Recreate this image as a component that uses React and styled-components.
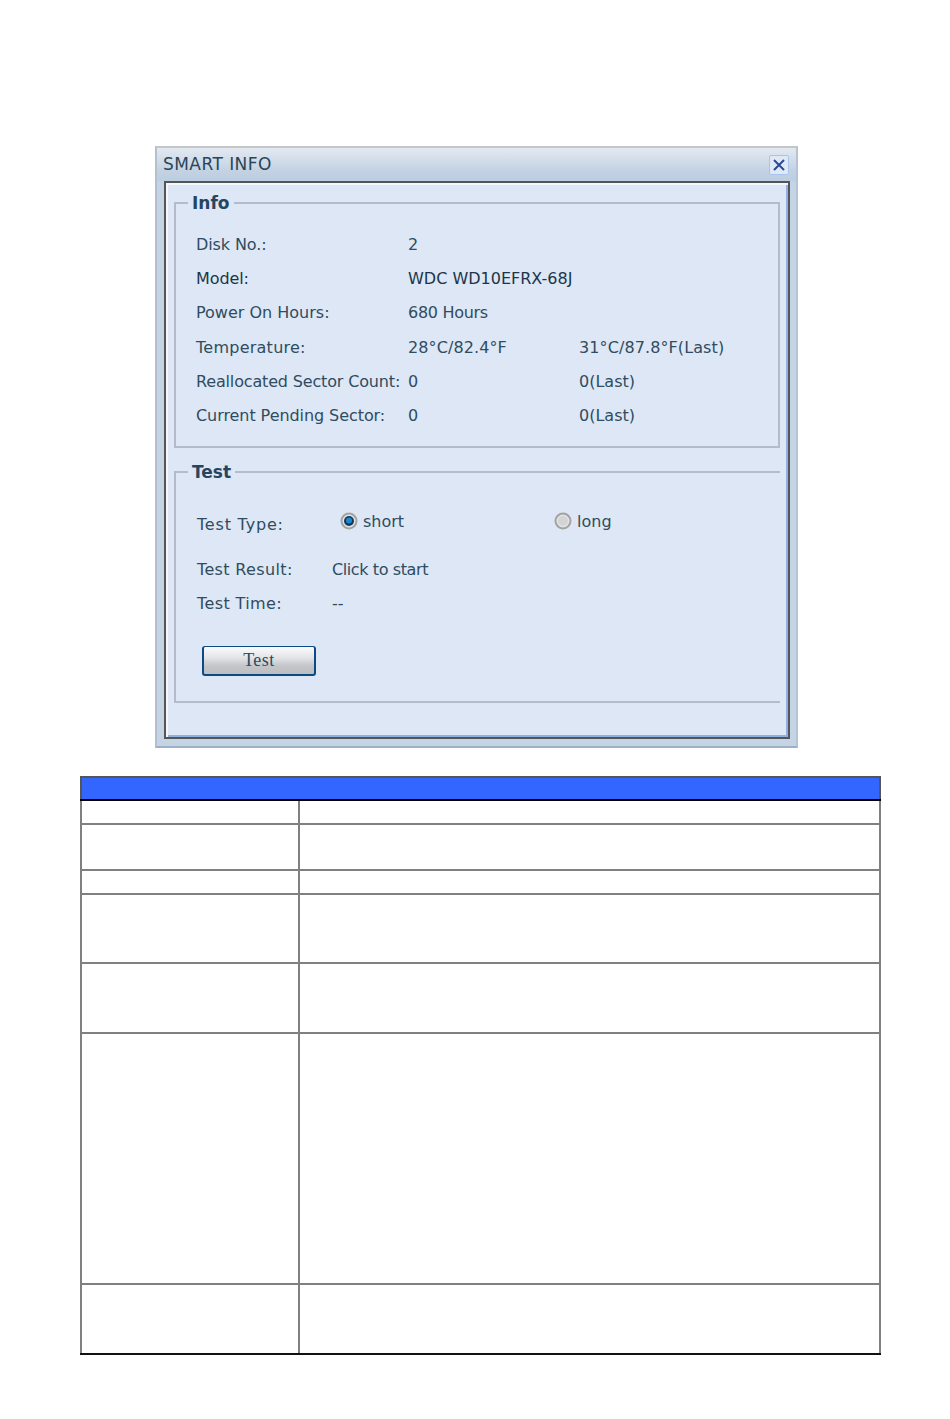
import React from 'react';
import styled, { createGlobalStyle } from 'styled-components';

const GlobalStyle = createGlobalStyle`
 body {
  margin: 0;
  background: #fff;
  font-family: 'DejaVu Sans', Verdana, sans-serif;
 }
`;

const INFO_ROWS = [
  { label: 'Disk No.:', value: '2', track: -0.1 },
  { label: 'Model:', value: 'WDC WD10EFRX-68J', dark: true, track: -0.1 },
  { label: 'Power On Hours:', value: '680 Hours', track: 0, valueTrack: -0.3 },
  { label: 'Temperature:', value: '28°C/82.4°F', last: '31°C/87.8°F(Last)', track: 0.25, valueTrack: 0.1 },
  { label: 'Reallocated Sector Count:', value: '0', last: '0(Last)', track: -0.16 },
  { label: 'Current Pending Sector:', value: '0', last: '0(Last)', track: -0.07 },
];

const TABLE_ROWS = [24, 46, 24, 69, 70, 251, 70];

function CloseIcon() {
  return (
    <svg width="14" height="14" viewBox="0 0 14 14">
      <path d="M2 2 L12 12 M12 2 L2 12" stroke="#2b4a9a" strokeWidth="2" fill="none" />
    </svg>
  );
}

function RadioIcon({ checked }) {
  return (
    <svg width="18" height="18" viewBox="0 0 18 18">
      <circle cx="9" cy="9" r="7.5" fill="#e4e4e4" stroke="#a3a3a3" strokeWidth="2" />
      {checked ? (
        <>
          <circle cx="9" cy="9" r="5" fill="#12385f" />
          <circle cx="9" cy="8.5" r="3" fill="#1f86cc" />
        </>
      ) : (
        <circle cx="9" cy="9" r="5" fill="#d2d4d6" />
      )}
    </svg>
  );
}

export default function App() {
  return (
    <>
      <GlobalStyle />
      <Page>
        <Dialog>
          <TitleBar>
            <Title>SMART INFO</Title>
            <CloseButton><CloseIcon /></CloseButton>
          </TitleBar>
          <Body>
            <InfoSet>
              <Legend>Info</Legend>
              <InfoGrid>
                {INFO_ROWS.map((row) => (
                  <React.Fragment key={row.label}>
                    <Field $dark={row.dark} $track={row.track}>{row.label}</Field>
                    <Field $dark={row.dark} $track={row.valueTrack}>{row.value}</Field>
                    <Field $track={row.valueTrack}>{row.last}</Field>
                  </React.Fragment>
                ))}
              </InfoGrid>
            </InfoSet>
            <TestSet>
              <Legend>Test</Legend>
              <TypeRow>
                <TypeLabel>Test Type:</TypeLabel>
                <RadioOption $width="214px">
                  <RadioIcon checked />
                  short
                </RadioOption>
                <RadioOption>
                  <RadioIcon />
                  long
                </RadioOption>
              </TypeRow>
              <ResultRow $top="24px">
                <ResultLabel $track={0.35}>Test Result:</ResultLabel>
                <Field $track={-0.4}>Click to start</Field>
              </ResultRow>
              <ResultRow $top="9px">
                <ResultLabel $track={0.4}>Test Time:</ResultLabel>
                <Field>--</Field>
              </ResultRow>
              <TestButton type="button">Test</TestButton>
            </TestSet>
          </Body>
        </Dialog>
        <SpecTable>
          <colgroup>
            <col width="218" />
            <col />
          </colgroup>
          <thead>
            <tr>
              <HeadCell colSpan={2} />
            </tr>
          </thead>
          <tbody>
            {TABLE_ROWS.map((height, i) => (
              <Row key={i} $height={height}>
                <Cell />
                <Cell />
              </Row>
            ))}
          </tbody>
        </SpecTable>
      </Page>
    </>
  );
}

const Page = styled.div`
 width: 950px;
 height: 1419px;
 padding-top: 146px;
 box-sizing: border-box;
 overflow: hidden;
`;

const Dialog = styled.div`
 width: 643px;
 height: 602px;
 margin-left: 155px;
 box-sizing: border-box;
 display: flex;
 flex-direction: column;
 background: #c5d4e5;
 border: 1px solid #a9b6c6;
 border-top: 2px solid #c4c7ca;
 border-left: 2px solid #b4c0cf;
 border-right: 2px solid #b4c3d6;
 border-bottom: 2px solid #9fb0c6;
`;

const TitleBar = styled.div`
 height: 33px;
 flex: none;
 display: flex;
 align-items: center;
 justify-content: space-between;
 padding: 0 7px 0 6px;
 background: linear-gradient(#e3e9f1, #c2d2e3 70%, #bccee1);
`;

const Title = styled.div`
 font-size: 17px;
 line-height: 20px;
 margin-top: -1px;
 color: #2a4558;
 letter-spacing: 0.45px;
`;

const CloseButton = styled.div`
 width: 18px;
 height: 18px;
 display: flex;
 align-items: center;
 justify-content: center;
 background: #dfe9f6;
 border: 1px solid #a8c4ee;
 border-radius: 2px;
`;

const Body = styled.div`
 flex: none;
 width: 626px;
 height: 558px;
 margin-left: 7px;
 box-sizing: border-box;
 padding: 10px 8px 0 8px;
 background: #dee7f5;
 border: 2px solid #555;
 box-shadow: inset 2px 2px 0 #f3f7fc, inset -2px -2px 0 #8fb0e0;
`;

const InfoSet = styled.fieldset`
 width: 606px;
 height: 255px;
 margin: 0;
 padding: 0;
 box-sizing: border-box;
 border: 2px solid #b4bbcb;
`;

const TestSet = styled.fieldset`
 width: 606px;
 height: 241px;
 margin: 14px 0 0;
 padding: 0;
 box-sizing: border-box;
 border: 2px solid #b4bbcb;
 border-right: none;
`;

const Legend = styled.legend`
 margin-left: 12px;
 padding: 0 4px;
 font-size: 17px;
 line-height: 20px;
 font-weight: bold;
 color: #254660;
`;

const InfoGrid = styled.div`
 display: grid;
 grid-template-columns: 212px 171px 1fr;
 grid-auto-rows: 34.2px;
 align-items: center;
 padding: 14.4px 0 0 20px;
`;

const Field = styled.div`
 font-size: 16px;
 color: ${(p) => (p.$dark ? '#1c3549' : '#2f4c60')};
 letter-spacing: ${(p) => p.$track || 0}px;
 white-space: nowrap;
`;

const TypeRow = styled.div`
 display: flex;
 align-items: center;
 height: 24px;
 margin-top: 27px;
 padding-left: 21px;
`;

const TypeLabel = styled.div`
 width: 143px;
 font-size: 16px;
 color: #2f4c60;
 letter-spacing: 0.8px;
 padding-top: 6px;
`;

const RadioOption = styled.div`
 display: flex;
 align-items: center;
 gap: 5px;
 width: ${(p) => p.$width || 'auto'};
 font-size: 16px;
 color: #2f4c60;
`;

const ResultRow = styled.div`
 display: flex;
 align-items: center;
 height: 25px;
 margin-top: ${(p) => p.$top};
 padding-left: 21px;
`;

const ResultLabel = styled(Field)`
 width: 135px;
`;

const TestButton = styled.button`
 display: block;
 width: 114px;
 height: 30px;
 margin: 30px 0 0 26px;
 padding: 0;
 font-family: 'Liberation Serif', serif;
 font-size: 18px;
 letter-spacing: 0.5px;
 color: #2b4a66;
 background: linear-gradient(#fbfbfc, #e3e4e6 40%, #c3c5c9 70%, #bcbec2);
 border: 2px solid #0b4a85;
 border-top-width: 1px;
 border-radius: 3px;
`;

const SpecTable = styled.table`
 table-layout: fixed;
 width: 801px;
 height: 578px;
 margin: 28px 0 0 80px;
 border-collapse: collapse;
`;

const HeadCell = styled.th`
 height: 21px;
 padding: 0;
 background: #3366ff;
 border: 2px solid #555;
 border-bottom: 2px solid #000;
`;

const Row = styled.tr`
 height: ${(p) => p.$height}px;
`;

const Cell = styled.td`
 padding: 0;
 border: 2px solid #808080;
 ${Row}:last-child & {
  border-bottom: 2px solid #111;
 }
`;
